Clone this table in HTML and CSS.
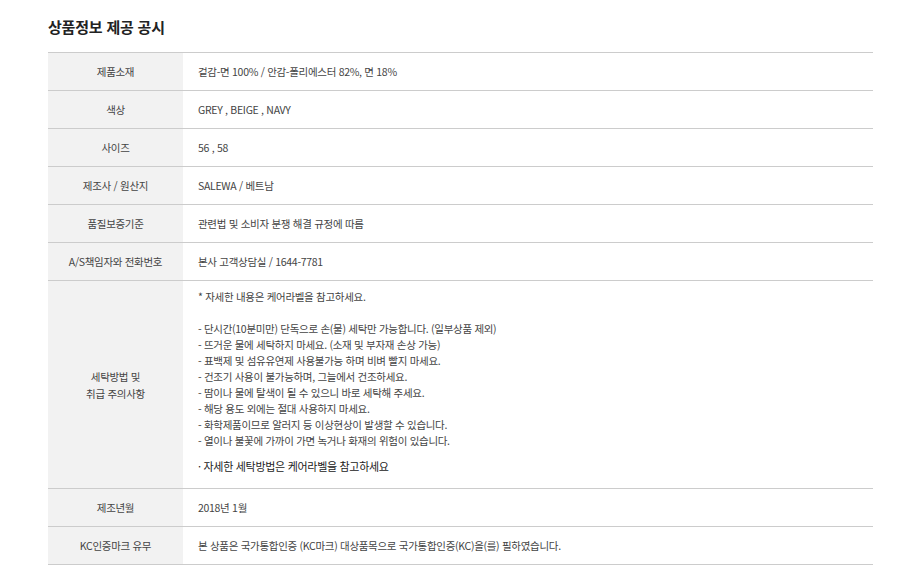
FILE: index.html
```html
<!DOCTYPE html>
<html lang="ko">
<head>
<meta charset="utf-8">
<title>상품정보 제공 공시</title>
<link rel="stylesheet" href="styles.css">
</head>
<body>
<section class="notice">
  <h2 class="notice-title">상품정보 제공 공시</h2>
  <table class="info-table">
    <tbody>
      <tr><th>제품소재</th><td>겉감-면 100% / 안감-폴리에스터 82%, 면 18%</td></tr>
      <tr><th>색상</th><td>GREY , BEIGE , NAVY</td></tr>
      <tr><th>사이즈</th><td>56 , 58</td></tr>
      <tr><th>제조사 / 원산지</th><td>SALEWA / 베트남</td></tr>
      <tr><th>품질보증기준</th><td>관련법 및 소비자 분쟁 해결 규정에 따름</td></tr>
      <tr><th>A/S책임자와 전화번호</th><td>본사 고객상담실 / 1644-7781</td></tr>
      <tr class="wash-row">
        <th>세탁방법 및<br>취급 주의사항</th>
        <td>
          <p class="wash-lines">* 자세한 내용은 케어라벨을 참고하세요.<br><br>- 단시간(10분미만) 단독으로 손(물) 세탁만 가능합니다. (일부상품 제외)<br>- 뜨거운 물에 세탁하지 마세요. (소재 및 부자재 손상 가능)<br>- 표백제 및 섬유유연제 사용불가능 하며 비벼 빨지 마세요.<br>- 건조기 사용이 불가능하며, 그늘에서 건조하세요.<br>- 땀이나 물에 탈색이 될 수 있으니 바로 세탁해 주세요.<br>- 해당 용도 외에는 절대 사용하지 마세요.<br>- 화학제품이므로 알러지 등 이상현상이 발생할 수 있습니다.<br>- 열이나 불꽃에 가까이 가면 녹거나 화재의 위험이 있습니다.</p>
          <p class="wash-note">· 자세한 세탁방법은 케어라벨을 참고하세요</p>
        </td>
      </tr>
      <tr><th>제조년월</th><td>2018년 1월</td></tr>
      <tr><th>KC인증마크 유무</th><td>본 상품은 국가통합인증 (KC마크) 대상품목으로 국가통합인증(KC)을(를) 필하였습니다.</td></tr>
    </tbody>
  </table>
</section>
</body>
</html>
```

FILE: styles.css
```css
html, body {
  margin: 0;
  padding: 0;
  background: #ffffff;
}

body {
  font-family: "Noto Sans CJK KR", "Noto Sans", sans-serif;
  color: #444444;
}

.notice {
  width: 825px;
  padding: 16px 0 0 48px;
}

.notice-title {
  margin: 0 0 14px;
  font-size: 15px;
  line-height: 22px;
  font-weight: 700;
  color: #222222;
  letter-spacing: -0.2px;
}

.info-table {
  width: 100%;
  border-collapse: collapse;
  border-top: 1px solid #cccccc;
  font-size: 10.5px;
  letter-spacing: -0.3px;
}

.info-table tr {
  border-bottom: 1px solid #cccccc;
}

.info-table th {
  width: 135px;
  height: 37px;
  padding: 0;
  background: #f2f2f2;
  font-weight: 400;
  color: #444444;
  text-align: center;
  vertical-align: middle;
  line-height: 17px;
}

.info-table td {
  padding: 0 15px;
  height: 37px;
  color: #444444;
  text-align: left;
  vertical-align: middle;
  line-height: 16px;
}

.wash-row td {
  padding: 8px 15px 14px;
}

.wash-lines {
  margin: 0;
  line-height: 16px;
}

.wash-note {
  margin: 9px 0 0;
  line-height: 16px;
  font-size: 11px;
  color: #222222;
}
```
